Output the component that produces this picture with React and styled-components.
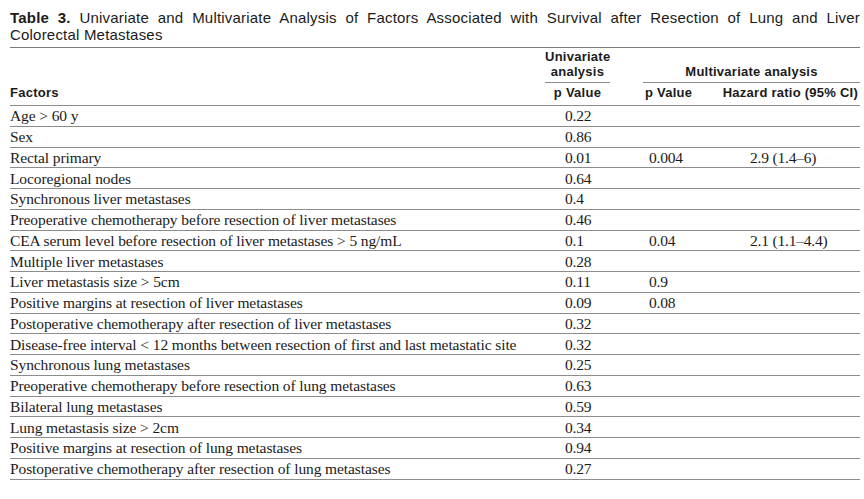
import React from "react"
import styled, { createGlobalStyle } from "styled-components"

const GlobalStyle = createGlobalStyle`
  html, body {
    margin: 0;
    padding: 0;
    background: #ffffff;
  }
  body {
    color: #1b1b1b;
  }
`

const colors = {
  text: "#1b1b1b",
  rule: "#8c8c8c",
  ruleDark: "#7a7a7a",
}

const Page = styled.div`
  width: 864px;
  height: 499px;
  padding: 9px 4px 0 10px;
  box-sizing: border-box;
  overflow: hidden;
`

const Caption = styled.div`
  font-family: "Liberation Sans", Arial, sans-serif;
  font-size: 15px;
  line-height: 17px;
  letter-spacing: 0.2px;
  padding-bottom: 4px;
  border-bottom: 1px solid ${colors.ruleDark};
  width: 850px;
`

const CaptionLine = styled.div`
  text-align: ${props => (props.justify ? "justify" : "left")};
  text-align-last: ${props => (props.justify ? "justify" : "left")};
  white-space: ${props => (props.justify ? "normal" : "nowrap")};
`

const CaptionLabel = styled.b`
  font-weight: 700;
`

const Table = styled.table`
  border-collapse: collapse;
  table-layout: fixed;
  width: 850px;
`

const HeadCell = styled.th`
  font-family: "Liberation Sans", Arial, sans-serif;
  font-weight: 700;
  font-size: 13px;
  letter-spacing: 0.25px;
  line-height: 15px;
  padding: 0;
  vertical-align: bottom;
  text-align: ${props => props.align || "left"};
  padding-left: ${props => props.indent || 0}px;
  padding-right: ${props => props.trail || 0}px;
  color: ${colors.text};
`

const GroupLabel = styled.div`
  padding: 1px 0 3px;
  margin: 0 ${props => props.inset || 0}px;
  border-bottom: 1px solid ${colors.rule};
  text-align: center;
`

const SubHeadRow = styled.tr`
  border-bottom: 1px solid ${colors.rule};

  th {
    height: 19px;
    padding-top: 0;
    padding-bottom: 3px;
    vertical-align: middle;
  }
`

const BodyRow = styled.tr`
  border-bottom: 1px solid ${colors.rule};
`

const Cell = styled.td`
  font-family: "Liberation Serif", "Times New Roman", serif;
  font-size: 15.5px;
  letter-spacing: ${props => (props.numeric ? "-0.2px" : "-0.1px")};
  height: 19.75px;
  line-height: 19px;
  padding: 0 0 0 ${props => props.indent || 0}px;
  white-space: nowrap;
  color: ${colors.text};
`

const rows = [
  { factor: "Age > 60 y", uni: "0.22" },
  { factor: "Sex", uni: "0.86" },
  { factor: "Rectal primary", uni: "0.01", multi: "0.004", hazard: "2.9 (1.4–6)" },
  { factor: "Locoregional nodes", uni: "0.64" },
  { factor: "Synchronous liver metastases", uni: "0.4" },
  { factor: "Preoperative chemotherapy before resection of liver metastases", uni: "0.46" },
  {
    factor: "CEA serum level before resection of liver metastases > 5 ng/mL",
    uni: "0.1",
    multi: "0.04",
    hazard: "2.1 (1.1–4.4)",
  },
  { factor: "Multiple liver metastases", uni: "0.28" },
  { factor: "Liver metastasis size > 5cm", uni: "0.11", multi: "0.9" },
  { factor: "Positive margins at resection of liver metastases", uni: "0.09", multi: "0.08" },
  { factor: "Postoperative chemotherapy after resection of liver metastases", uni: "0.32" },
  {
    factor: "Disease-free interval < 12 months between resection of first and last metastatic site",
    uni: "0.32",
  },
  { factor: "Synchronous lung metastases", uni: "0.25" },
  { factor: "Preoperative chemotherapy before resection of lung metastases", uni: "0.63" },
  { factor: "Bilateral lung metastases", uni: "0.59" },
  { factor: "Lung metastasis size > 2cm", uni: "0.34" },
  { factor: "Positive margins at resection of lung metastases", uni: "0.94" },
  { factor: "Postoperative chemotherapy after resection of lung metastases", uni: "0.27" },
]

const App = () => {
  return (
    <>
      <GlobalStyle />
      <Page>
        <Caption>
          <CaptionLine justify>
            <CaptionLabel>Table 3.</CaptionLabel> Univariate and Multivariate
            Analysis of Factors Associated with Survival after Resection of
            Lung and Liver
          </CaptionLine>
          <CaptionLine>Colorectal Metastases</CaptionLine>
        </Caption>
        <Table>
          <colgroup>
            <col style={{ width: 530 }} />
            <col style={{ width: 75 }} />
            <col style={{ width: 28 }} />
            <col style={{ width: 72 }} />
            <col style={{ width: 145 }} />
          </colgroup>
          <thead>
            <tr>
              <HeadCell />
              <HeadCell align="center">
                <GroupLabel inset={5}>
                  Univariate
                  <br />
                  analysis
                </GroupLabel>
              </HeadCell>
              <HeadCell />
              <HeadCell colSpan={2} align="center">
                <GroupLabel>Multivariate analysis</GroupLabel>
              </HeadCell>
            </tr>
            <SubHeadRow>
              <HeadCell>Factors</HeadCell>
              <HeadCell align="center">p Value</HeadCell>
              <HeadCell />
              <HeadCell indent={2}>p Value</HeadCell>
              <HeadCell align="right" trail={2}>
                Hazard ratio (95% CI)
              </HeadCell>
            </SubHeadRow>
          </thead>
          <tbody>
            {rows.map(row => (
              <BodyRow key={row.factor}>
                <Cell>{row.factor}</Cell>
                <Cell numeric indent={25}>
                  {row.uni}
                </Cell>
                <Cell />
                <Cell numeric indent={6}>
                  {row.multi}
                </Cell>
                <Cell numeric indent={35}>
                  {row.hazard}
                </Cell>
              </BodyRow>
            ))}
          </tbody>
        </Table>
      </Page>
    </>
  )
}

export default App
